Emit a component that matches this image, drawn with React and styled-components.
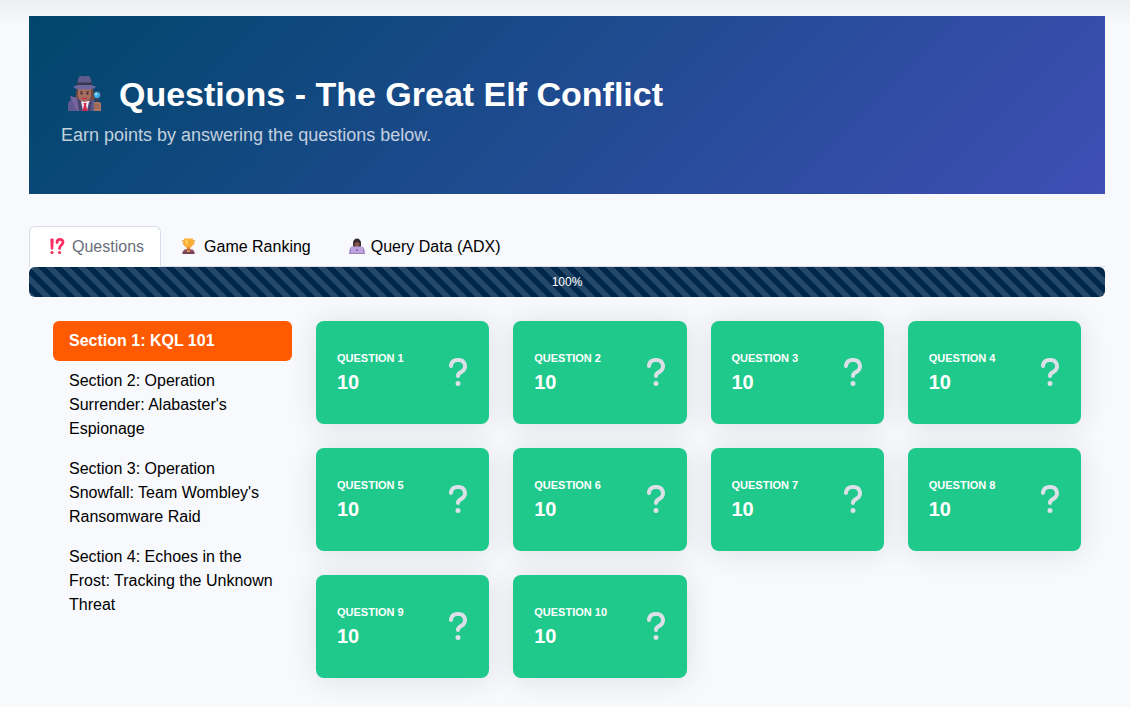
import React from "react";
import styled, { createGlobalStyle } from "styled-components";

const GlobalStyle = createGlobalStyle`
  *, *::before, *::after { box-sizing: border-box; }
  body {
    margin: 0;
    min-height: 100vh;
    background: linear-gradient(#edeef2, #f8f9fd 24px) #f8f9fd no-repeat;
    font-family: "Liberation Sans", Arial, sans-serif;
    font-size: 16px;
    line-height: 24px;
    color: #000;
  }
  h1, p, ul { margin: 0; padding: 0; }
  button { font: inherit; border: 0; cursor: pointer; }
`;

const Page = styled.main`
  padding: 16px 25px 30px 29px;
`;

const Banner = styled.header`
  padding: 54px 32px 45px;
  margin-bottom: 32px;
  background: linear-gradient(135deg, #00466b 0%, #3f4fb5 100%);
`;

const Title = styled.h1`
  display: flex;
  align-items: center;
  gap: 12px;
  padding-left: 6px;
  font-size: 34px;
  line-height: 48px;
  font-weight: 700;
  color: #fff;
`;

const Subtitle = styled.p`
  margin-top: 4px;
  font-size: 18px;
  line-height: 27px;
  color: rgba(255, 255, 255, 0.75);
`;

const Tabs = styled.div`
  display: flex;
  border-bottom: 1px solid #d9deea;
`;

const Tab = styled.button`
  display: flex;
  align-items: center;
  gap: 4px;
  margin-bottom: -1px;
  padding: 8px 16px 7px;
  border: 1px solid transparent;
  border-radius: 6px 6px 0 0;
  background: transparent;
  color: #000;
  &[aria-selected="true"] {
    background: #fff;
    border-color: #d9deea #d9deea #fff;
    color: #69707a;
  }
`;

const TabIcon = styled.svg`
  width: 22px;
  height: 18px;
`;

const Progress = styled.div`
  height: 30px;
  border-radius: 6px;
  overflow: hidden;
  background: #e0e5ec;
`;

const ProgressFill = styled.div`
  height: 100%;
  display: flex;
  align-items: center;
  justify-content: center;
  font-size: 12px;
  color: #fff;
  background-color: #00284d;
  background-image: linear-gradient(
    45deg,
    rgba(255, 255, 255, 0.15) 25%,
    transparent 25%,
    transparent 50%,
    rgba(255, 255, 255, 0.15) 50%,
    rgba(255, 255, 255, 0.15) 75%,
    transparent 75%,
    transparent
  );
  background-size: 16px 16px;
`;

const Content = styled.div`
  display: grid;
  grid-template-columns: minmax(0, 239fr) minmax(0, 765fr);
  gap: 24px;
  padding: 24px;
`;

const SectionList = styled.nav`
  display: flex;
  flex-direction: column;
`;

const SectionLink = styled.a`
  padding: 8px 16px;
  border-radius: 6px;
  text-decoration: none;
  color: #000;
  &[aria-current="true"] {
    background: #ff5a00;
    color: #fff;
    font-weight: 700;
  }
`;

const CardGrid = styled.div`
  display: grid;
  grid-template-columns: repeat(4, minmax(0, 1fr));
  align-content: start;
  gap: 24px;
`;

const Card = styled.button`
  display: flex;
  align-items: center;
  justify-content: space-between;
  height: 103px;
  padding: 2px 21px 0;
  border-radius: 8px;
  background: #1fc98b;
  box-shadow: 0 2px 28px 0 rgba(33, 40, 50, 0.12);
  text-align: left;
  color: #fff;
`;

const CardLabel = styled.span`
  display: block;
  font-size: 11px;
  line-height: 16px;
  font-weight: 700;
  text-transform: uppercase;
`;

const CardPoints = styled.span`
  display: block;
  font-size: 20px;
  line-height: 32px;
  font-weight: 700;
`;

const CardIcon = styled.svg`
  width: 20px;
  height: 32px;
  margin-bottom: 4px;
  fill: #dbdfe8;
`;

const Detective = () => (
  <svg width="40" height="40" viewBox="3 2 40 40" aria-hidden="true">
    <path d="M13 15h16l1 8 1 5-4 3H15l-4-3 1-5z" fill="#74483f" />
    <path d="M4 39v-5c0-4 1-5 3-6l-1-4 7 2 8 8 7-7 3 3c2 1 3 3 3 5v4z" fill="#60598f" />
    <path d="M6 24l7 2 6 13h-6z" fill="#77659f" />
    <path d="M16 29h10l1 10H15z" fill="#eee7f2" />
    <path d="M13 27l4 2 2 10h-4zM28 28l-3 2-2 9h4z" fill="#49466f" />
    <path d="M19.500 31h3l-.5 2 1.500 6h-5l1.500-6z" fill="#d62849" />
    <path d="M14 16h13v7c0 4-3 7-6.500 7S14 27 14 23z" fill="#a56d60" />
    <path d="M16 19.500l3 .5M22 20l3-.5" stroke="#5d3633" />
    <circle cx="17.500" cy="21.500" r="1" fill="#2b1d28" />
    <circle cx="23.500" cy="21.500" r="1" fill="#2b1d28" />
    <path d="M18.500 26.500h4" stroke="#bf334d" strokeWidth="1.500" strokeLinecap="round" />
    <path d="M13 12l1.500-6c.5-2 3-2.500 6-1.500 3-1 5.500-.5 6 1.500l1.500 6z" fill="#615b8c" />
    <path d="M12.500 10.500h15.500v3H12.500z" fill="#393651" />
    <path d="M9 14c2 1 3-1 5-1h13c2 0 3 2 5 1-1 3-5 3.500-11.500 3.500S10 17 9 14z" fill="#6d669b" />
    <path d="M33 27v6" stroke="#3f3b4c" strokeWidth="2" />
    <circle cx="33" cy="23" r="3.500" fill="#3eb5f5" stroke="#454c6a" />
    <circle cx="32" cy="22" r="1.200" fill="#a3e5ff" />
    <path d="M30 32c0-2 1-2 3-2s4 0 4 2v7h-7z" fill="#a8745f" />
    <path d="M30 33h5M30 35.500h5" stroke="#855344" strokeWidth=".7" />
  </svg>
);

const Interrobang = () => (
  <TabIcon viewBox="2 4 22 18" aria-hidden="true">
    <path d="M6.300 5.500c0-1.500 3.400-1.500 3.400 0L9.200 15c-.2 1-2.200 1-2.400 0z" fill="#fb2d62" />
    <circle cx="8" cy="18.500" r="1.600" fill="#ef3154" />
    <path
      d="M13 8.500c0-4 6-4 6-.5 0 3.500-3.500 3-3.500 6.500"
      fill="none"
      stroke="#fb2d62"
      strokeWidth="2.800"
      strokeLinecap="round"
    />
    <circle cx="15.500" cy="18.500" r="1.600" fill="#ef3154" />
  </TabIcon>
);

const Trophy = () => (
  <TabIcon viewBox="2 4 22 18" aria-hidden="true">
    <path d="M9 6.500H6.800c0 3 1 4.500 3.200 5M16 6.500h2.200c0 3-1 4.500-3.200 5" fill="none" stroke="#eda344" strokeWidth="1.200" />
    <path d="M8 4.500h9V9c0 3-2 5-4.500 5S8 12 8 9z" fill="#fbad35" />
    <path d="M9.500 5.500h2V11c-1.500-1-2-2-2-3z" fill="#ffd768" />
    <path d="M11.500 13h2l1.500 3h-5z" fill="#e58732" />
    <path d="M8 15.500h9l1 2.500H7z" fill="#8e5260" />
    <path d="M6.500 17.500h12V20h-12z" fill="#744158" />
    <path d="M11 16.500h3V18h-3z" fill="#eda344" />
  </TabIcon>
);

const Technologist = () => (
  <TabIcon viewBox="1 4 22 18" aria-hidden="true">
    <path d="M5.500 17c0-3 2-4 5-4h5c3 0 5 1 5 4v2h-15z" fill="#7a68a8" />
    <path d="M9 12V9c0-6 8-6 8 0v3l-1 2h-6z" fill="#352a31" />
    <path d="M10.500 9c1.500 0 2-1 2.500-1.500.5.500 1 1.500 2.500 1.500v2c0 3-5 3-5 0z" fill="#845549" />
    <rect x="6.500" y="12.500" width="13" height="7" rx="1" fill="#bda2df" />
    <path d="M5 19h16v1H5z" fill="#9d82bb" />
    <circle cx="13" cy="16" r="1" fill="#8060ac" />
  </TabIcon>
);

const tabs = [
  { label: "Questions", Icon: Interrobang },
  { label: "Game Ranking", Icon: Trophy },
  { label: "Query Data (ADX)", Icon: Technologist },
];

const sections = [
  "Section 1: KQL 101",
  "Section 2: Operation Surrender: Alabaster's Espionage",
  "Section 3: Operation Snowfall: Team Wombley's Ransomware Raid",
  "Section 4: Echoes in the Frost: Tracking the Unknown Threat",
];

const questions = Array.from({ length: 10 }, (_, i) => ({ number: i + 1, points: 10 }));

export default function App() {
  return (
    <>
      <GlobalStyle />
      <Page>
        <Banner>
          <Title>
            <Detective />
            Questions - The Great Elf Conflict
          </Title>
          <Subtitle>Earn points by answering the questions below.</Subtitle>
        </Banner>
        <Tabs role="tablist">
          {tabs.map(({ label, Icon }, i) => (
            <Tab key={label} type="button" role="tab" aria-selected={i === 0}>
              <Icon />
              {label}
            </Tab>
          ))}
        </Tabs>
        <Progress role="progressbar" aria-label="Progress" aria-valuenow={100} aria-valuemin={0} aria-valuemax={100}>
          <ProgressFill style={{ width: "100%" }}>100%</ProgressFill>
        </Progress>
        <Content>
          <SectionList aria-label="Sections">
            {sections.map((name, i) => (
              <SectionLink key={name} href={`#section-${i + 1}`} aria-current={i === 0 ? "true" : undefined}>
                {name}
              </SectionLink>
            ))}
          </SectionList>
          <CardGrid>
            {questions.map(({ number, points }) => (
              <Card key={number} type="button">
                <span>
                  <CardLabel>Question {number}</CardLabel>
                  <CardPoints>{points}</CardPoints>
                </span>
                <CardIcon viewBox="0 0 320 512" aria-hidden="true">
                  <path d="M80 160c0-35.3 28.7-64 64-64h32c35.3 0 64 28.7 64 64v3.6c0 21.8-11.1 42.1-29.4 53.8l-42.2 27.1c-25.2 16.2-40.4 44.1-40.4 74V320c0 17.7 14.3 32 32 32s32-14.3 32-32v-1.4c0-8.2 4.2-15.8 11-20.2l42.2-27.1c36.6-23.6 58.8-64.1 58.8-107.7V160c0-70.7-57.3-128-128-128H144C73.3 32 16 89.3 16 160c0 17.7 14.3 32 32 32s32-14.3 32-32zm80 320a40 40 0 1 0 0-80 40 40 0 1 0 0 80z" />
                </CardIcon>
              </Card>
            ))}
          </CardGrid>
        </Content>
      </Page>
    </>
  );
}
